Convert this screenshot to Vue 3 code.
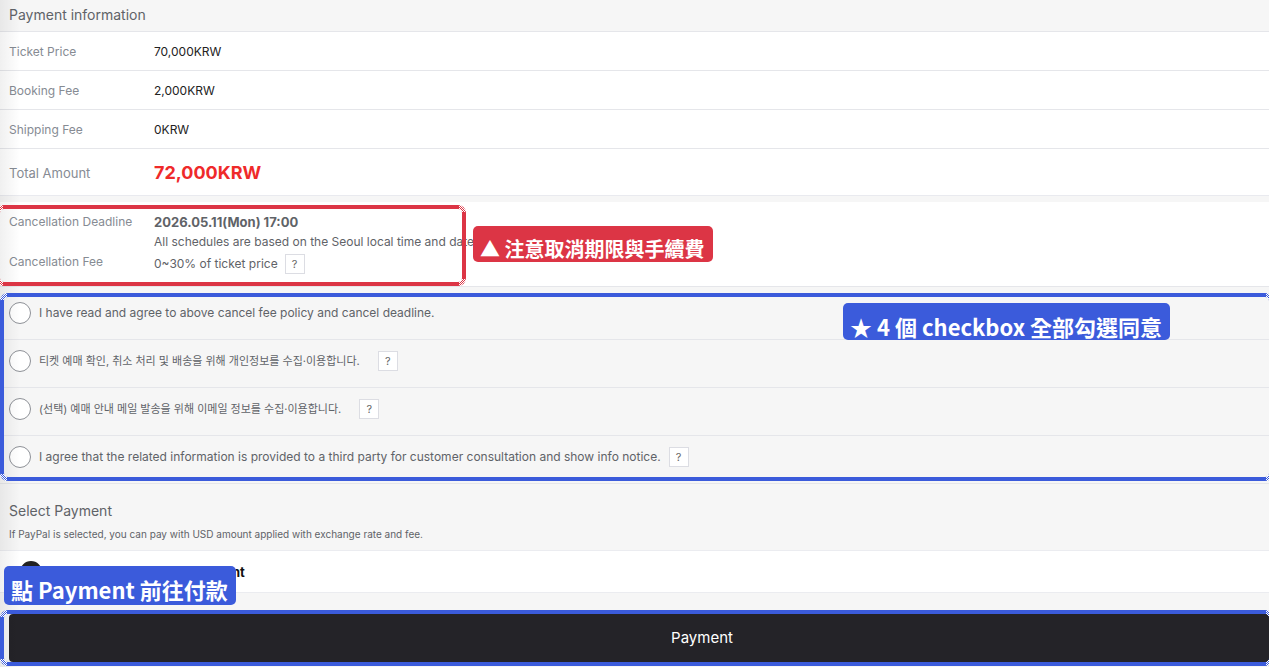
<template>
  <main class="page">
    <h2 class="section-title">Payment information</h2>

    <table class="price-table">
      <tbody>
        <tr v-for="item in prices" :key="item.label">
          <th scope="row">{{ item.label }}</th>
          <td>{{ item.value }}</td>
        </tr>
        <tr class="total">
          <th scope="row">Total Amount</th>
          <td>72,000KRW</td>
        </tr>
      </tbody>
    </table>

    <section class="cancellation">
      <dl class="cancel-list">
        <dt>Cancellation Deadline</dt>
        <dd>
          <strong>2026.05.11(Mon) 17:00</strong>
          <p>All schedules are based on the Seoul local time and date.</p>
        </dd>
        <dt>Cancellation Fee</dt>
        <dd class="fee">
          0~30% of ticket price
          <button type="button" class="help">?</button>
        </dd>
      </dl>
      <div class="frame frame-red">
        <svg v-for="c in corners" :key="c" :class="['corner', c]" viewBox="0 0 8 8">
          <path :d="hatch" />
        </svg>
      </div>
      <span class="note note-red">▲ 注意取消期限與手續費</span>
    </section>

    <section class="agreements">
      <div v-for="item in agreements" :key="item.id" class="agreement">
        <input :id="item.id" v-model="item.checked" type="checkbox" class="round" />
        <label :for="item.id" :lang="item.lang">{{ item.text }}</label>
        <button v-if="item.help" type="button" class="help">?</button>
      </div>
      <div class="frame frame-blue">
        <svg v-for="c in corners" :key="c" :class="['corner', c]" viewBox="0 0 8 8">
          <path :d="hatch" />
        </svg>
      </div>
      <span class="note note-agree">★ 4 個 checkbox 全部勾選同意</span>
    </section>

    <header class="select-header">
      <h2>Select Payment</h2>
      <p>If PayPal is selected, you can pay with USD amount applied with exchange rate and fee.</p>
    </header>

    <section class="methods">
      <input id="method-card" v-model="method" type="radio" value="card" class="method-radio" />
      <label for="method-card">Overseas Credit Card Payment</label>
      <span class="note note-pay">點 Payment 前往付款</span>
    </section>

    <div class="submit">
      <button type="button" class="pay-button">Payment</button>
      <div class="frame frame-submit">
        <svg v-for="c in corners" :key="c" :class="['corner', c]" viewBox="0 0 8 8">
          <path :d="hatch" />
        </svg>
      </div>
    </div>
  </main>
</template>

<script setup>
import { ref } from 'vue'

const prices = [
  { label: 'Ticket Price', value: '70,000KRW' },
  { label: 'Booking Fee', value: '2,000KRW' },
  { label: 'Shipping Fee', value: '0KRW' }
]

const agreements = ref([
  { id: 'agree-cancel', lang: 'en', text: 'I have read and agree to above cancel fee policy and cancel deadline.', help: false, checked: false },
  { id: 'agree-privacy', lang: 'ko', text: '티켓 예매 확인, 취소 처리 및 배송을 위해 개인정보를 수집·이용합니다.', help: true, checked: false },
  { id: 'agree-mail', lang: 'ko', text: '(선택) 예매 안내 메일 발송을 위해 이메일 정보를 수집·이용합니다.', help: true, checked: false },
  { id: 'agree-third', lang: 'en', text: 'I agree that the related information is provided to a third party for customer consultation and show info notice.', help: true, checked: false }
])

const method = ref('card')

const corners = ['tl', 'tr', 'bl', 'br']

// checkered pixels along the diagonal of a frame corner
const buildHatch = () => {
  let d = ''
  for (let y = 0; y < 7; y++) {
    for (let x = 0; x < 7; x++) {
      if (x + y >= 4 && x + y <= 9 && (x + y) % 2 === 1) {
        d += `M${x} ${y}h1v1h-1z`
      }
    }
  }
  return d
}
const hatch = buildHatch()
</script>

<style>
body {
  margin: 0;
  background: #f6f6f6;
}
</style>

<style scoped>
.page {
  position: relative;
  overflow: hidden;
  font-family: Inter, "Noto Sans CJK KR", sans-serif;
  font-size: 12px;
  line-height: 20px;
  color: #5f6368;
  background: #f6f6f6;
}

/* soft shade along the left edge */
.page::after {
  content: '';
  position: absolute;
  inset: 0 auto 0 0;
  width: 20px;
  background: linear-gradient(to right, rgba(0, 0, 0, 0.06), transparent);
  pointer-events: none;
}

h2,
p,
dl,
dd {
  margin: 0;
}

h2 {
  font-size: 14px;
  font-weight: 400;
  line-height: 20px;
}

.section-title {
  padding: 5px 9px 6px;
}

.price-table {
  width: 100%;
  border-collapse: separate;
  border-spacing: 0;
  background: #fff;
}

.price-table th,
.price-table td {
  height: 37px;
  padding: 1px 0 0;
  border-top: 1px solid #e5e6ea;
  text-align: left;
}

.price-table th {
  width: 145px;
  padding-left: 9px;
  font-weight: 400;
  color: #868b93;
}

.price-table td {
  color: #222;
}

.price-table .total th,
.price-table .total td {
  height: 45px;
  border-bottom: 1px solid #e9eaef;
}

.price-table .total th {
  font-size: 13px;
}

.price-table .total td {
  font-size: 18px;
  font-weight: 700;
  color: #ef2a2a;
}

.cancellation {
  position: relative;
  margin-top: 6px;
  padding: 10px 9px 12px;
  background: #fff;
  border-bottom: 1px solid #e5e6ea;
}

.cancel-list {
  display: grid;
  grid-template-columns: 145px 1fr;
}

.cancel-list dt {
  color: #868b93;
}

.cancel-list strong {
  display: block;
  font-size: 13px;
}

.fee {
  display: flex;
  align-items: center;
  gap: 7px;
  padding-top: 2px;
}

.help {
  box-sizing: border-box;
  width: 20px;
  height: 20px;
  padding: 0;
  border: 1px solid #dcdde3;
  background: #fff;
  font: inherit;
  font-size: 11px;
  line-height: 18px;
  color: #666;
}

.agreements {
  position: relative;
}

.agreement {
  display: flex;
  align-items: center;
  box-sizing: border-box;
  height: 48px;
  padding: 0 9px 5px;
  border-bottom: 1px solid #e5e6ea;
}

.agreement:first-child {
  height: 53px;
  padding-bottom: 0;
}

.agreement label {
  margin: 0 8px;
}

.agreement label:lang(ko) {
  margin-right: 18px;
  font-size: 11px;
}

.round,
.method-radio {
  appearance: none;
  box-sizing: border-box;
  flex: none;
  width: 22px;
  height: 22px;
  margin: 0;
  border: 1px solid #8e9197;
  border-radius: 50%;
  background: #fff;
}

.round:checked {
  border: 7px solid #222;
}

.select-header {
  padding: 17px 9px 6px;
}

.select-header p {
  padding-top: 3px;
  font-size: 10px;
}

.methods {
  position: relative;
  display: flex;
  align-items: center;
  gap: 8px;
  box-sizing: border-box;
  height: 43px;
  padding-left: 20px;
  border-top: 1px solid #ebecf0;
  border-bottom: 1px solid #ebecf0;
  background: #fff;
  font-size: 13px;
  font-weight: 700;
  color: #111;
}

.method-radio:checked {
  border: 7px solid #222;
}

.submit {
  position: relative;
  padding: 21px 0 5px 9px;
}

/* the button runs past the right side of the view */
.pay-button {
  display: block;
  width: 110%;
  height: 48px;
  padding: 0;
  border: 0;
  border-radius: 4px;
  background: #242328;
  font: inherit;
  font-size: 15px;
  color: #fff;
}

.frame {
  position: absolute;
  z-index: 1;
  box-sizing: border-box;
  border: 4px solid #3b5bdb;
  border-radius: 8px;
  pointer-events: none;
}

.frame-red {
  top: 3px;
  bottom: 0;
  left: -4px;
  width: 470px;
  border-color: #dc3545;
}

.frame-blue {
  inset: 6px -4px 3px 0;
}

.frame-submit {
  inset: 17px -4px 1px 0;
}

.corner {
  position: absolute;
  width: 8px;
  height: 8px;
  fill: #fff;
}

.tl {
  top: -4px;
  left: -4px;
}

.tr {
  top: -4px;
  right: -4px;
  transform: scaleX(-1);
}

.bl {
  bottom: -4px;
  left: -4px;
  transform: scaleY(-1);
}

.br {
  right: -4px;
  bottom: -4px;
  transform: scale(-1);
}

.note {
  position: absolute;
  z-index: 2;
  box-sizing: border-box;
  padding: 5px 8px 0 7px;
  border-radius: 5px;
  background: #3b5bdb;
  font-family: "Noto Sans CJK TC", sans-serif;
  font-size: 22px;
  font-weight: 700;
  line-height: 36px;
  white-space: nowrap;
  color: #fff;
}

.note-red {
  top: 24px;
  left: 473px;
  height: 36px;
  background: #dc3545;
  font-size: 20px;
}

.note-agree {
  top: 16px;
  right: 99px;
  height: 37px;
}

.note-pay {
  top: 15px;
  left: 4px;
  height: 39px;
}
</style>
